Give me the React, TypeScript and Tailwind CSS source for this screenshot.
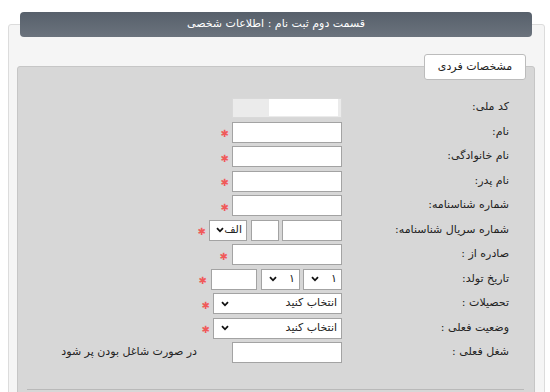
import React from "react";

const font = { fontFamily: '"DejaVu Sans", Tahoma, sans-serif' };

function Star() {
  return <span className="w-[6px] text-center text-[10px] leading-none text-[#f05a5a]">✱</span>;
}

function Box({ w, children }: { w: string; children?: React.ReactNode }) {
  return (
    <div className={`${w} h-[21px] shrink-0 border border-[#a3a3a3] bg-white`}>{children}</div>
  );
}

function Chevron() {
  return (
    <svg width="8" height="6" viewBox="0 0 8 6" className="shrink-0">
      <path d="M1 1.2 L4 4.3 L7 1.2" fill="none" stroke="#111" strokeWidth="1.8" />
    </svg>
  );
}

function Select({ w, text }: { w: string; text: string }) {
  return (
    <div className={`${w} flex h-[21px] shrink-0 items-center justify-between border border-[#a3a3a3] bg-white pl-[7px] pr-[4px] text-[11px] text-[#222]`}>
      <span>{text}</span>
      <Chevron />
    </div>
  );
}

function Row({ label, children }: { label: string; children: React.ReactNode }) {
  return (
    <div className="flex h-[21px] items-center">
      <div className="w-[167px] shrink-0 text-[11px] text-[#222]">{label}</div>
      <div className="flex items-center">{children}</div>
    </div>
  );
}

export default function App() {
  return (
    <div dir="rtl" style={font} className="h-[392px] w-[550px] overflow-hidden bg-white">
      <div className="h-[12px]" />
      {/* header bar */}
      <div className="relative z-10 ml-[20px] mr-[18px] flex h-[25px] items-center justify-center rounded-[4px] bg-gradient-to-b from-[#57606b] to-[#6b737d] text-[11px] text-white">
        قسمت دوم ثبت نام : اطلاعات شخصی
      </div>

      <div className="-mt-[13px] ml-[8px] mr-[5px] h-[400px] rounded-[3px] border border-[#dcdcdc] bg-[#f5f5f5] pl-[8px] pr-[9px] pt-[41px]">
        <div className="relative h-[400px] rounded-t-[3px] border border-[#c6c6c6] bg-[#d7d7d7] pr-[25px] pt-[30px]">
          <div className="absolute -top-[13px] right-[8px] flex h-[26px] w-[102px] items-center justify-center rounded-[3px] border border-[#bcbcbc] bg-white text-[11px] text-[#222]">
            مشخصات فردی
          </div>

          <div className="flex flex-col gap-[3.5px]">
            <Row label="کد ملی:">
              <div className="flex h-[20px] w-[110px] items-center border border-[#d9d9d9] bg-[#ebebeb]">
                <div className="mr-[3px] h-[17px] w-[69px] bg-white" />
              </div>
            </Row>
            <Row label="نام:">
              <Box w="w-[110px]" />
              <span className="mr-[3px]"><Star /></span>
            </Row>
            <Row label="نام خانوادگی:">
              <Box w="w-[110px]" />
              <span className="mr-[3px]"><Star /></span>
            </Row>
            <Row label="نام پدر:">
              <Box w="w-[110px]" />
              <span className="mr-[3px]"><Star /></span>
            </Row>
            <Row label="شماره شناسنامه:">
              <Box w="w-[110px]" />
              <span className="mr-[3px]"><Star /></span>
            </Row>
            <Row label="شماره سریال شناسنامه:">
              <Box w="w-[60px]" />
              <div className="w-[3px]" />
              <Box w="w-[28px]" />
              <div className="w-[4px]" />
              <Select w="w-[38px]" text="الف" />
              <span className="mr-[3px]"><Star /></span>
            </Row>
            <Row label="صادره از :">
              <Box w="w-[110px]" />
              <span className="mr-[4px]"><Star /></span>
            </Row>
            <Row label="تاریخ تولد:">
              <Select w="w-[39px]" text="۱" />
              <div className="w-[3px]" />
              <Select w="w-[39px]" text="۱" />
              <div className="w-[4px]" />
              <Box w="w-[46px]" />
              <span className="mr-[4px]"><Star /></span>
            </Row>
            <Row label="تحصیلات :">
              <Select w="w-[129px]" text="انتخاب کنید" />
              <span className="mr-[3px]"><Star /></span>
            </Row>
            <Row label="وضعیت فعلی :">
              <Select w="w-[129px]" text="انتخاب کنید" />
              <span className="mr-[3px]"><Star /></span>
            </Row>
            <Row label="شغل فعلی :">
              <Box w="w-[110px]" />
              <span className="mr-[35px] whitespace-nowrap text-[11px] text-[#222]">در صورت شاغل بودن پر شود</span>
            </Row>
          </div>

          <div className="ml-[9px] mr-[-15px] mt-[26px] h-px bg-[#b9b9b9]" />
        </div>
      </div>
    </div>
  );
}
